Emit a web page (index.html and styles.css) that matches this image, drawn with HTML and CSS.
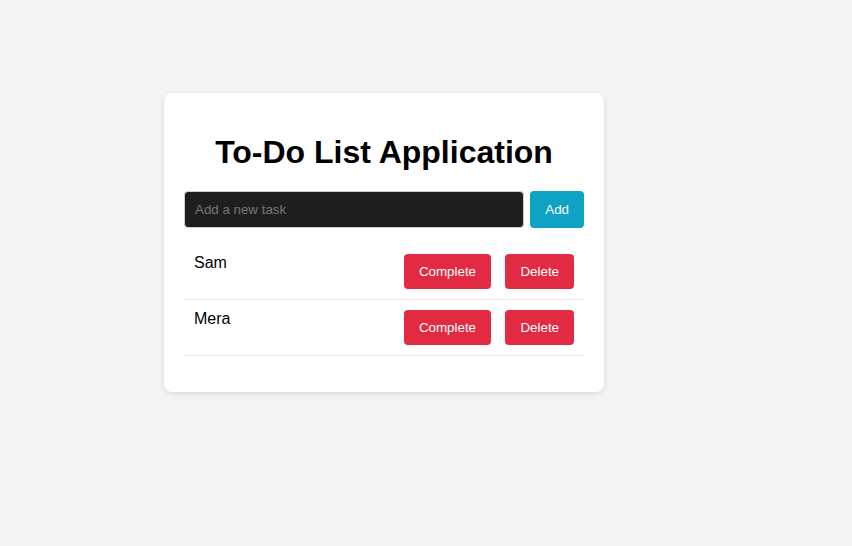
FILE: index.html
```html
<!DOCTYPE html>
<html lang="en">
<head>
<meta charset="utf-8">
<title>To-Do List Application</title>
<link rel="stylesheet" href="styles.css">
</head>
<body>
<div class="card">
  <h1 class="title">To-Do List Application</h1>
  <div class="add-row">
    <input class="task-input" type="text" placeholder="Add a new task">
    <button class="btn btn-add">Add</button>
  </div>
  <ul class="task-list">
    <li class="task">
      <span class="task-name">Sam</span>
      <div class="task-actions">
        <button class="btn btn-danger">Complete</button>
        <button class="btn btn-danger">Delete</button>
      </div>
    </li>
    <li class="task">
      <span class="task-name">Mera</span>
      <div class="task-actions">
        <button class="btn btn-danger">Complete</button>
        <button class="btn btn-danger">Delete</button>
      </div>
    </li>
  </ul>
</div>
</body>
</html>
```
FILE: styles.css
```css
html, body {
  margin: 0;
  padding: 0;
}
body {
  background: #f4f4f4;
  font-family: "Liberation Sans", Arial, sans-serif;
  font-size: 16px;
  color: #000;
  padding: 93px 0 0 164px;
  min-height: 546px;
  box-sizing: border-box;
}
.card {
  width: 400px;
  padding: 20px;
  background: #fff;
  border-radius: 8px;
  box-shadow: 0 2px 6px rgba(0, 0, 0, 0.1);
}
.title {
  font-size: 32px;
  font-weight: bold;
  text-align: center;
  margin: 21px 0 20px;
  line-height: 37px;
}
.add-row {
  display: flex;
  gap: 6px;
}
.task-input {
  flex: 1;
  min-width: 0;
  padding: 10px;
  font-family: "Liberation Sans", Arial, sans-serif;
  font-size: 13.333px;
  background: #1e1e1e;
  color: #fff;
  border: 1px solid #cfcfcf;
  border-radius: 4px;
  outline: none;
}
.task-input::placeholder {
  color: #777;
}
.btn {
  font-family: "Liberation Sans", Arial, sans-serif;
  font-size: 13.333px;
  color: #fff;
  border: none;
  border-radius: 4px;
  padding: 10px 15px;
  cursor: pointer;
}
.btn-add {
  background: #0ea2c4;
}
.btn-danger {
  background: #e22a42;
  margin-left: 10px;
}
.task-list {
  list-style: none;
  margin: 16px 0;
  padding: 0;
}
.task {
  display: flex;
  justify-content: space-between;
  padding: 10px;
  border-bottom: 1px solid #eee;
}
```
